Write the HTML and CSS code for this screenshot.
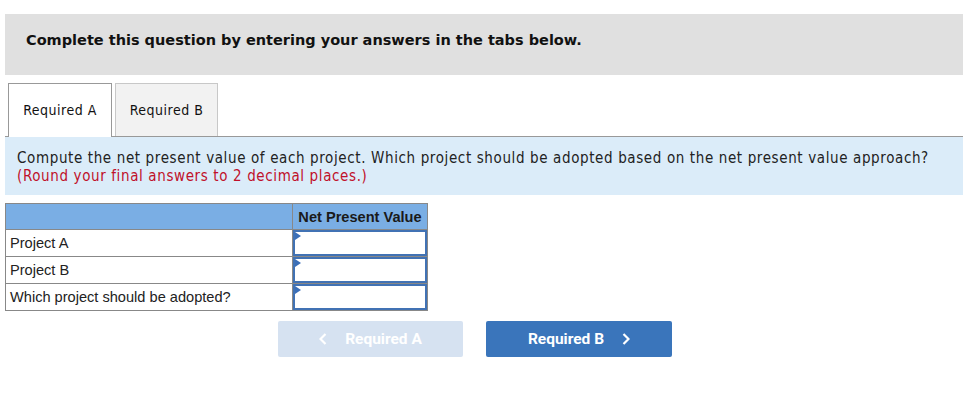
FILE: index.html
```html
<!DOCTYPE html>
<html>
<head>
<meta charset="utf-8">
<link rel="stylesheet" href="styles.css">
</head>
<body>
<div class="page">
  <div class="banner">Complete this question by entering your answers in the tabs below.</div>
  <div class="tabs">
    <div class="tab active">Required A</div>
    <div class="tab">Required B</div>
  </div>
  <div class="question">
    <div>Compute the net present value of each project. Which project should be adopted based on the net present value approach?</div>
    <div class="note">(Round your final answers to 2 decimal places.)</div>
  </div>
  <table class="grid">
    <tr class="head"><th class="label"></th><th class="val">Net Present Value</th></tr>
    <tr><td class="label">Project A</td><td class="val"><div class="inp"><span class="tri"></span></div></td></tr>
    <tr><td class="label">Project B</td><td class="val"><div class="inp"><span class="tri"></span></div></td></tr>
    <tr><td class="label">Which project should be adopted?</td><td class="val"><div class="inp"><span class="tri"></span></div></td></tr>
  </table>
  <div class="nav">
    <div class="btn prev"><svg class="chev" width="8" height="12" viewBox="0 0 8 12"><polyline points="6.5,1 1.5,6 6.5,11" fill="none" stroke="#fff" stroke-width="2.2"/></svg>Required A</div>
    <div class="btn next">Required B<svg class="chev" width="8" height="12" viewBox="0 0 8 12"><polyline points="1.5,1 6.5,6 1.5,11" fill="none" stroke="#fff" stroke-width="2.2"/></svg></div>
  </div>
</div>
</body>
</html>
```
FILE: styles.css
```css
html, body { margin: 0; padding: 0; background: #fff; }
.page { padding: 14px 13px 0 5px; width: 958px; }
.banner {
  background: #e0e0e0;
  height: 61px;
  box-sizing: border-box;
  padding: 18px 0 0 21px;
  font-family: "DejaVu Sans", Verdana, sans-serif;
  font-weight: bold;
  font-size: 14.5px;
  color: #111;
}
.tabs {
  display: flex;
  gap: 3px;
  margin-top: 8px;
  padding-left: 3px;
  border-bottom: 1px solid #999;
  height: 54px;
  box-sizing: border-box;
}
.tab {
  width: 103px;
  height: 53px;
  box-sizing: border-box;
  border: 1px solid #c8c8c8;
  border-bottom: none;
  background: #f2f2f2;
  font-family: "DejaVu Sans", Tahoma, sans-serif;
  font-stretch: condensed;
  font-size: 14px;
  letter-spacing: 0.5px;
  color: #111;
  display: flex;
  align-items: center;
  justify-content: center;
  padding-bottom: 1px;
}
.tab.active {
  background: #fff;
  border-color: #999;
  height: 54px;
  margin-bottom: -1px;
  width: 104px;
}
.question {
  background: #dbecf9;
  height: 58px;
  box-sizing: border-box;
  padding: 12px 0 0 12px;
  font-family: "DejaVu Sans", Tahoma, sans-serif;
  font-stretch: condensed;
  font-size: 15px;
  letter-spacing: 0.62px;
  line-height: 18px;
  color: #222;
}
.note { color: #c0102a; }
.grid {
  margin-top: 8px;
  border-collapse: collapse;
  font-family: "Liberation Sans", Arial, sans-serif;
  font-size: 14.6px;
  color: #222;
}
.grid td, .grid th { border: 1px solid #888; padding: 0; }
.grid tr { height: 27px; }
.grid tr.head { height: 26px; background: #7aaee4; }
.grid th.val { font-weight: bold; text-align: center; color: #1a1a1a; }
.grid .label { width: 282px; padding-left: 4px; text-align: left; }
.grid .val { width: 134px; }
.grid td.val { padding: 0; }
.inp {
  position: relative;
  height: 26px;
  box-sizing: border-box;
  border: 2px solid #4172b4;
  background: #fff;
}
.tri {
  position: absolute;
  left: 0;
  top: 0;
  width: 0; height: 0;
  border-top: 4px solid transparent;
  border-bottom: 4px solid transparent;
  border-left: 6px solid #3b6fb8;
}
.nav {
  display: flex;
  gap: 23px;
  margin-top: 10px;
  padding-left: 273px;
}
.btn {
  width: 185px;
  height: 36px;
  border-radius: 2px;
  display: flex;
  align-items: center;
  justify-content: center;
  font-family: Roboto, "Liberation Sans", sans-serif;
  font-weight: bold;
  font-size: 15.5px;
  color: #fff;
}
.prev { background: #d6e2f1; }
.prev .chev { margin-right: 18px; }
.next { background: #3a75bb; width: 186px; }
.next .chev { margin-left: 18px; }
.chev { display: block; }
```
